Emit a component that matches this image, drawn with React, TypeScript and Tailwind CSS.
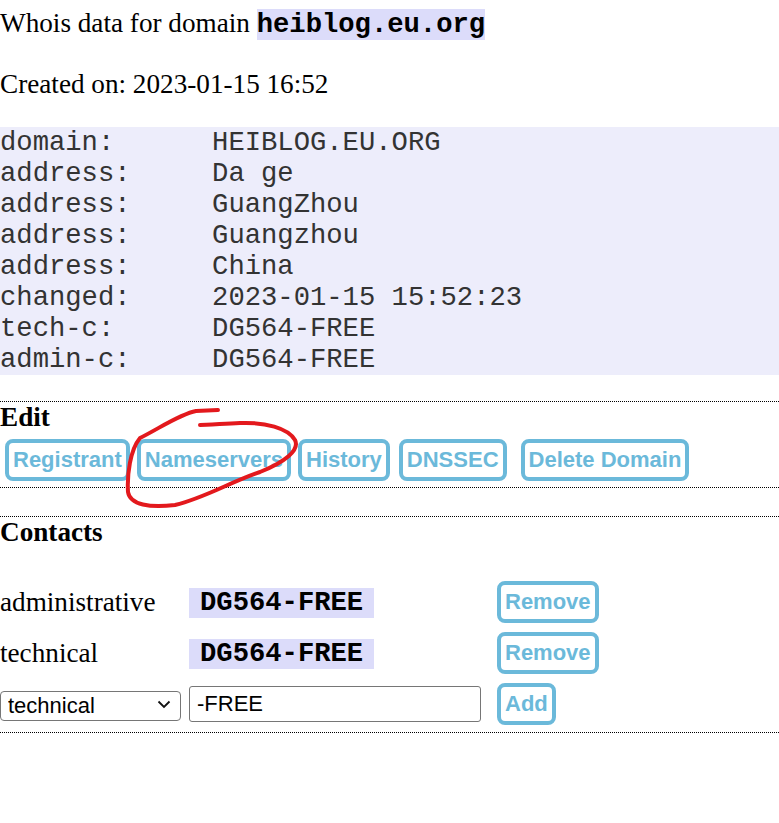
import React from "react";

const btn =
  "box-border h-[42px] border-4 border-[#6bb9da] rounded-[8px] bg-white px-[4px] font-['Liberation_Sans',Arial,sans-serif] font-bold text-[22px] leading-[26px] text-[#6bb9da]";

const mono = "font-['Liberation_Mono','Courier_New',monospace]";

const whois = [
  ["domain:", "HEIBLOG.EU.ORG"],
  ["address:", "Da ge"],
  ["address:", "GuangZhou"],
  ["address:", "Guangzhou"],
  ["address:", "China"],
  ["changed:", "2023-01-15 15:52:23"],
  ["tech-c:", "DG564-FREE"],
  ["admin-c:", "DG564-FREE"],
];

function ContactRow({ role }: { role: string }) {
  return (
    <div className="grid grid-cols-[189px_308px_auto] items-center h-[42px]">
      <span>{role}</span>
      <span>
        <code className={`${mono} font-bold bg-[#dcdcfa] px-[11px] inline-block leading-[30px]`}>DG564-FREE</code>
      </span>
      <span>
        <button className={btn}>Remove</button>
      </span>
    </div>
  );
}

export default function App() {
  return (
    <div className="relative w-[779px] min-h-[823px] bg-white text-black font-['Liberation_Serif','Times_New_Roman',serif] text-[27.2px] leading-[31px] pt-[8px]">
      <p>
        Whois data for domain{" "}
        <code className={`${mono} font-bold bg-[#dcdcfa]`}>heiblog.eu.org</code>
      </p>
      <p className="mt-[29px]">Created on: 2023-01-15 16:52</p>

      <pre className={`${mono} mt-[27px] bg-[#ededfb] text-[#333] text-[27.2px] leading-[31px]`}>
        {whois.map(([k, v]) => k.padEnd(13, " ") + v).join("\n")}
      </pre>

      <div className="mt-[26px] border-y border-dotted border-black pb-[6px]">
        <h3 className="font-bold">Edit</h3>
        <div className="flex mt-[6px]">
          <button className={`${btn} ml-[5px]`}>Registrant</button>
          <button className={`${btn} ml-[7px]`}>Nameservers</button>
          <button className={`${btn} ml-[7px]`}>History</button>
          <button className={`${btn} ml-[9px]`}>DNSSEC</button>
          <button className={`${btn} ml-[14px]`}>Delete Domain</button>
        </div>
      </div>

      <div className="mt-[28px] border-y border-dotted border-black pb-[7px]">
        <h3 className="font-bold">Contacts</h3>
        <div className="mt-[33px] flex flex-col gap-[9px]">
          <ContactRow role="administrative" />
          <ContactRow role="technical" />
          <div className="grid grid-cols-[189px_308px_auto] items-center h-[42px]">
            <span className="relative w-[181px] h-[30px]">
              <select
                defaultValue="technical"
                className="appearance-none w-[181px] h-[30px] border border-[#767676] rounded-[4px] bg-white pl-[7px] font-['Liberation_Sans',Arial,sans-serif] text-[22px] leading-[26px] text-black"
              >
                <option value="administrative">administrative</option>
                <option value="technical">technical</option>
              </select>
              <svg className="absolute left-[157px] top-[11px] pointer-events-none" width="14" height="9" viewBox="0 0 14 9" fill="none">
                <path d="M1.5 1.5 L7 7 L12.5 1.5" stroke="#111" strokeWidth="1.8" />
              </svg>
            </span>
            <span>
              <input
                defaultValue="-FREE"
                className="w-[292px] h-[36px] border border-[#767676] rounded-[3px] px-[7px] font-['Liberation_Sans',Arial,sans-serif] text-[22px] text-black"
              />
            </span>
            <span>
              <button className={btn}>Add</button>
            </span>
          </div>
        </div>
      </div>

      <svg className="absolute left-0 top-0 pointer-events-none" width="779" height="823" viewBox="0 0 779 823" fill="none">
        <path
          d="M218 410 L196 411 C180 414 160 428 140 438 C130 450 127 475 128 492 C130 505 150 508 175 505 C205 498 230 482 260 472 C285 462 300 450 295 440 C288 428 265 422 240 423 C220 424 205 425 200 425"
          stroke="#e3191d"
          strokeWidth="4"
          strokeLinecap="round"
          strokeLinejoin="round"
        />
      </svg>
    </div>
  );
}
